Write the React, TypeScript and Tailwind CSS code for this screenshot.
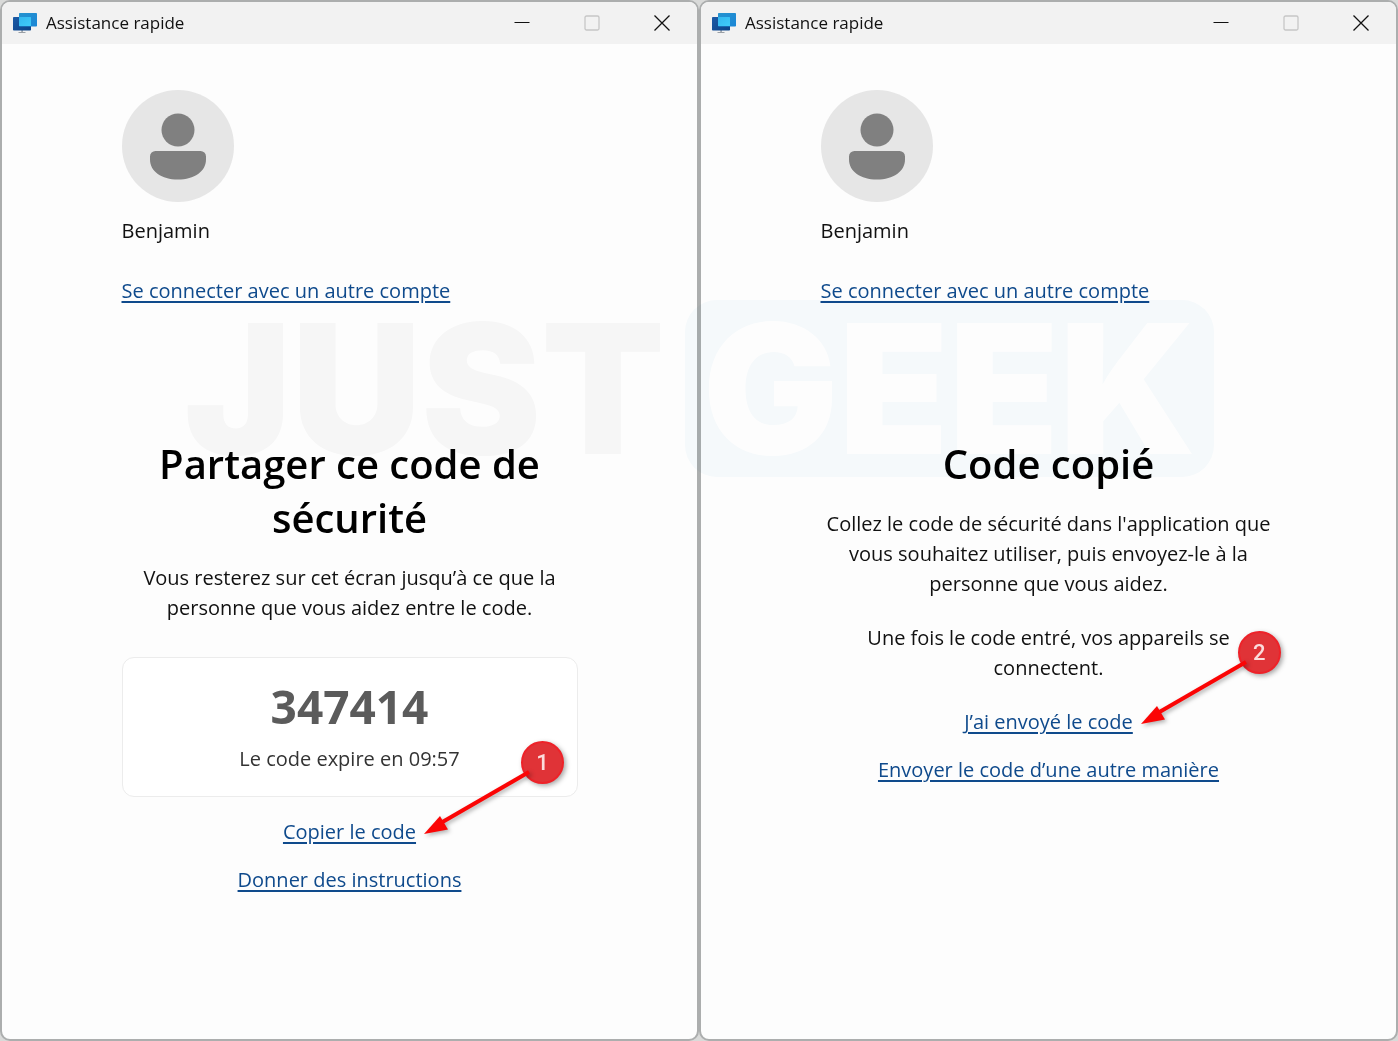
import type { ReactNode } from "react";

function AppIcon() {
  return (
    <svg className="h-6 w-6 shrink-0" viewBox="0 0 24 24" aria-hidden="true">
      <defs>
        <linearGradient id="screenBack" x1="0" y1="0" x2="1" y2="1">
          <stop offset="0" stopColor="#1c5aa6" />
          <stop offset="1" stopColor="#0c4488" />
        </linearGradient>
        <linearGradient id="screenFront" x1="0" y1="0" x2="1" y2="1">
          <stop offset="0" stopColor="#2593cf" />
          <stop offset="1" stopColor="#1b86d6" />
        </linearGradient>
        <linearGradient id="screenShared" x1="0" y1="0" x2="1" y2="1">
          <stop offset="0" stopColor="#35b8f0" />
          <stop offset="1" stopColor="#3fccf9" />
        </linearGradient>
      </defs>
      <path d="M8.300 19h1.600v2h2.600v1H5.500v-1h2.800z" fill="#9aa0a6" />
      <rect x="0" y="6" width="18" height="13.500" rx="0.800" fill="url(#screenBack)" />
      <rect x="6" y="2" width="18" height="13.500" rx="0.800" fill="url(#screenFront)" />
      <rect x="6" y="6" width="12" height="9" rx="0.600" fill="url(#screenShared)" />
    </svg>
  );
}

function TitleBar() {
  return (
    <header className="flex h-[42px] items-center bg-[#f2f2f2] pl-[11px]">
      <AppIcon />
      <span className="ml-[9px] flex-1 text-[17px] leading-6 text-[#111]">Assistance rapide</span>
      <button type="button" aria-label="Réduire" className="flex h-full w-[70px] items-center justify-center">
        <svg width="16" height="16" viewBox="0 0 16 16" stroke="#111">
          <path d="M0.500 7.500h15" />
        </svg>
      </button>
      <button type="button" aria-label="Agrandir" disabled className="flex h-full w-[70px] items-center justify-center">
        <svg width="16" height="16" viewBox="0 0 16 16" fill="none" stroke="#c6c6c6">
          <rect x="1" y="1" width="14" height="14" rx="1.500" strokeWidth="1.300" />
        </svg>
      </button>
      <button type="button" aria-label="Fermer" className="flex h-full w-[70px] items-center justify-center">
        <svg width="16" height="16" viewBox="0 0 16 16" stroke="#111" strokeWidth="1.300">
          <path d="M0.500 0.500l15 15M15.500 0.500l-15 15" />
        </svg>
      </button>
    </header>
  );
}

function Avatar() {
  return (
    <svg className="size-28" viewBox="0 0 112 112" role="img" aria-label="Benjamin">
      <circle cx="56" cy="56" r="56" fill="#e6e6e6" />
      <circle cx="56" cy="40" r="16.500" fill="#808080" />
      <path
        d="M33.500 61h45a5.500 5.500 0 0 1 5.500 5.500v3C84 81.500 72.500 89.500 56 89.500S28 81.500 28 69.500v-3a5.500 5.500 0 0 1 5.500-5.500z"
        fill="#808080"
      />
    </svg>
  );
}

function TextLink({ children }: { children: ReactNode }) {
  return (
    <a href="#" className="text-[#0f4a8c] underline decoration-2 underline-offset-3">
      {children}
    </a>
  );
}

// numbered badge with an arrow that points back at the link on its left
function Callout({ step }: { step: number }) {
  return (
    <span className="pointer-events-none absolute bottom-3 left-full ml-2 h-[94px] w-[140px]">
      <span className="absolute top-0 right-0 flex size-[43px] items-center justify-center rounded-full border-2 border-[#ee2229] bg-[#e03337] font-['Roboto',sans-serif] text-[22px] font-medium text-[#fbdcdc] shadow-[2px_2px_5px_rgba(0,0,0,0.350)]">
        {step}
      </span>
      <svg
        className="absolute inset-0 drop-shadow-[2px_2px_2px_rgba(0,0,0,0.300)]"
        width="140"
        height="94"
        viewBox="0 0 140 94"
      >
        <path d="M15 83L105 31" stroke="#fb0505" strokeWidth="4" />
        <path d="M0 93L16 75L24 88.500z" fill="#fb0505" />
      </svg>
    </span>
  );
}

function Window({ title, children }: { title: string; children: ReactNode }) {
  return (
    <section className="flex flex-1 flex-col overflow-hidden rounded-[10px] border-2 border-[#acaeae] bg-[#fdfdfd]">
      <TitleBar />
      <div className="mx-auto flex w-full max-w-[456px] flex-col pt-[46px] text-xl leading-[30px] text-[#111]">
        <Avatar />
        <p className="mt-[14px]">Benjamin</p>
        <p className="mt-[30px]">
          <TextLink>Se connecter avec un autre compte</TextLink>
        </p>
        <div className="mt-[131px] text-center">
          <h1 className="text-[40px] leading-[54px] font-semibold text-black">{title}</h1>
          {children}
        </div>
      </div>
    </section>
  );
}

function Watermark() {
  return (
    <div
      aria-hidden="true"
      className="pointer-events-none absolute inset-x-0 top-[300px] flex justify-center gap-5 font-['Inter',sans-serif] text-[180px] leading-[177px] font-black mix-blend-multiply"
    >
      <span className="text-[#f8f8f8]">JUST</span>
      <span className="rounded-[32px] bg-[#f7fbfd] px-[18px] text-white">GEEK</span>
    </div>
  );
}

export default function App() {
  return (
    <main className="relative flex min-h-screen bg-[#d9dad9] font-['Open_Sans','Noto_Sans',sans-serif]">
      <Window title="Partager ce code de sécurité">
        <p className="mt-[18px]">
          Vous resterez sur cet écran jusqu’à ce que la personne que vous aidez entre le code.
        </p>
        <div className="mt-[34px] rounded-xl border border-[#ececec] bg-white pt-[18px] pb-[22px]">
          <p className="text-[46px] leading-[60px] font-bold text-[#5b5b5b]">347414</p>
          <p className="mt-2 text-[#333]">Le code expire en 09:57</p>
        </div>
        <p className="mt-5">
          <span className="relative inline-block">
            <TextLink>Copier le code</TextLink>
            <Callout step={1} />
          </span>
        </p>
        <p className="mt-[18px]">
          <TextLink>Donner des instructions</TextLink>
        </p>
      </Window>

      <Window title="Code copié">
        <p className="mt-[18px]">
          Collez le code de sécurité dans l'application que vous souhaitez utiliser, puis envoyez-le à la
          personne que vous aidez.
        </p>
        <p className="mt-6">Une fois le code entré, vos appareils se connectent.</p>
        <p className="mt-6">
          <span className="relative inline-block">
            <TextLink>J’ai envoyé le code</TextLink>
            <Callout step={2} />
          </span>
        </p>
        <p className="mt-[18px]">
          <TextLink>Envoyer le code d’une autre manière</TextLink>
        </p>
      </Window>

      <Watermark />
    </main>
  );
}
